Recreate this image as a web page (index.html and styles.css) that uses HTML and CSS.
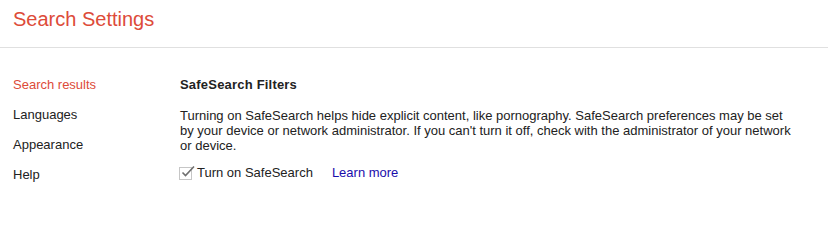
FILE: index.html
```html
<!DOCTYPE html>
<html lang="en">
<head>
<meta charset="utf-8">
<title>Search Settings</title>
<link rel="stylesheet" href="styles.css">
</head>
<body>
<header class="header">
  <h1 class="title">Search Settings</h1>
</header>
<div class="main">
  <nav class="nav">
    <div class="nav-item active">Search results</div>
    <div class="nav-item">Languages</div>
    <div class="nav-item">Appearance</div>
    <div class="nav-item">Help</div>
  </nav>
  <section class="content">
    <h2 class="heading">SafeSearch Filters</h2>
    <p class="desc">Turning on SafeSearch helps hide explicit content, like pornography. SafeSearch preferences may be set by your device or network administrator. If you can't turn it off, check with the administrator of your network or device.</p>
    <div class="check-row">
      <span class="checkbox"><svg class="tick" width="16" height="14" viewBox="0 0 16 14"><path d="M2.5 7.5 L5.5 10.5 L14 1.5" fill="none" stroke="#6f6f6f" stroke-width="1.6"/></svg></span>
      <span class="check-label">Turn on SafeSearch</span>
      <a class="learn" href="#">Learn more</a>
    </div>
  </section>
</div>
</body>
</html>
```
FILE: styles.css
```css
html, body {
  margin: 0;
  padding: 0;
  background: #fff;
}
body {
  font-family: "Liberation Sans", Arial, sans-serif;
  font-size: 13px;
  color: #222;
}
.header {
  height: 47px;
  box-sizing: content-box;
  border-bottom: 1px solid #e0e0e0;
  padding-left: 13px;
}
.title {
  margin: 0;
  padding-top: 7px;
  font-size: 20px;
  line-height: 24px;
  font-weight: normal;
  color: #dd4b39;
}
.main {
  display: flex;
  padding-top: 22px;
}
.nav {
  width: 167px;
  padding-left: 13px;
  flex: none;
}
.nav-item {
  line-height: 30px;
  height: 30px;
}
.nav-item.active {
  color: #dd4b39;
}
.content {
  flex: none;
  width: 616px;
}
.heading {
  margin: 0;
  font-size: 13px;
  line-height: 30px;
  font-weight: bold;
  letter-spacing: 0.2px;
}
.desc {
  margin: 8px 0 0;
  line-height: 15px;
}
.check-row {
  display: flex;
  align-items: center;
  margin-top: 12px;
  line-height: 15px;
}
.checkbox {
  position: relative;
  width: 11px;
  height: 11px;
  border: 1px solid #c6c6c6;
  margin-left: -1px;
  margin-right: 5px;
  margin-top: 1px;
  flex: none;
}
.tick {
  position: absolute;
  left: 0;
  top: -3px;
}
.check-label {
  margin-left: 0;
}
.learn {
  margin-left: 19px;
  color: #1a0dab;
  text-decoration: none;
}
```
